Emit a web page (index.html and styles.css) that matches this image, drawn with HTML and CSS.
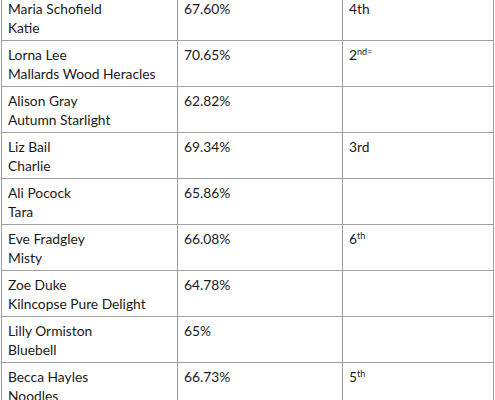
FILE: index.html
```html
<!DOCTYPE html>
<html>
<head>
<meta charset="utf-8">
<link rel="stylesheet" href="styles.css">
</head>
<body>
<table class="results">
  <tr><td>Maria Schofield<br>Katie</td><td>67.60%</td><td>4th</td></tr>
  <tr><td>Lorna Lee<br>Mallards Wood Heracles</td><td>70.65%</td><td>2<sup>nd=</sup></td></tr>
  <tr><td>Alison Gray<br>Autumn Starlight</td><td>62.82%</td><td></td></tr>
  <tr><td>Liz Bail<br>Charlie</td><td>69.34%</td><td>3rd</td></tr>
  <tr><td>Ali Pocock<br>Tara</td><td>65.86%</td><td></td></tr>
  <tr><td>Eve Fradgley<br>Misty</td><td>66.08%</td><td>6<sup>th</sup></td></tr>
  <tr><td>Zoe Duke<br>Kilncopse Pure Delight</td><td>64.78%</td><td></td></tr>
  <tr><td>Lilly Ormiston<br>Bluebell</td><td>65%</td><td></td></tr>
  <tr><td>Becca Hayles<br>Noodles</td><td>66.73%</td><td>5<sup>th</sup></td></tr>
</table>
</body>
</html>
```
FILE: styles.css
```css
html, body {
  margin: 0;
  padding: 0;
  background: #fff;
  overflow: hidden;
}
.results {
  margin: -6px 0 0 1px;
  border-collapse: collapse;
  width: 492px;
  table-layout: fixed;
  font-family: Lato, "Open Sans", sans-serif;
  font-size: 13.8px;
  line-height: 18.5px;
  color: #1a1a1a;
}
.results td {
  border: 1px solid #a0a0a0;
  vertical-align: top;
  padding: 5px 6px 0 6px;
  height: 40px;
}
.results td:nth-child(1) { width: 163px; }
.results td:nth-child(2) { width: 152px; }
.results td:nth-child(3) { width: 138px; }
.results sup {
  font-size: 9px;
  line-height: 0;
  vertical-align: 5px;
}
```
